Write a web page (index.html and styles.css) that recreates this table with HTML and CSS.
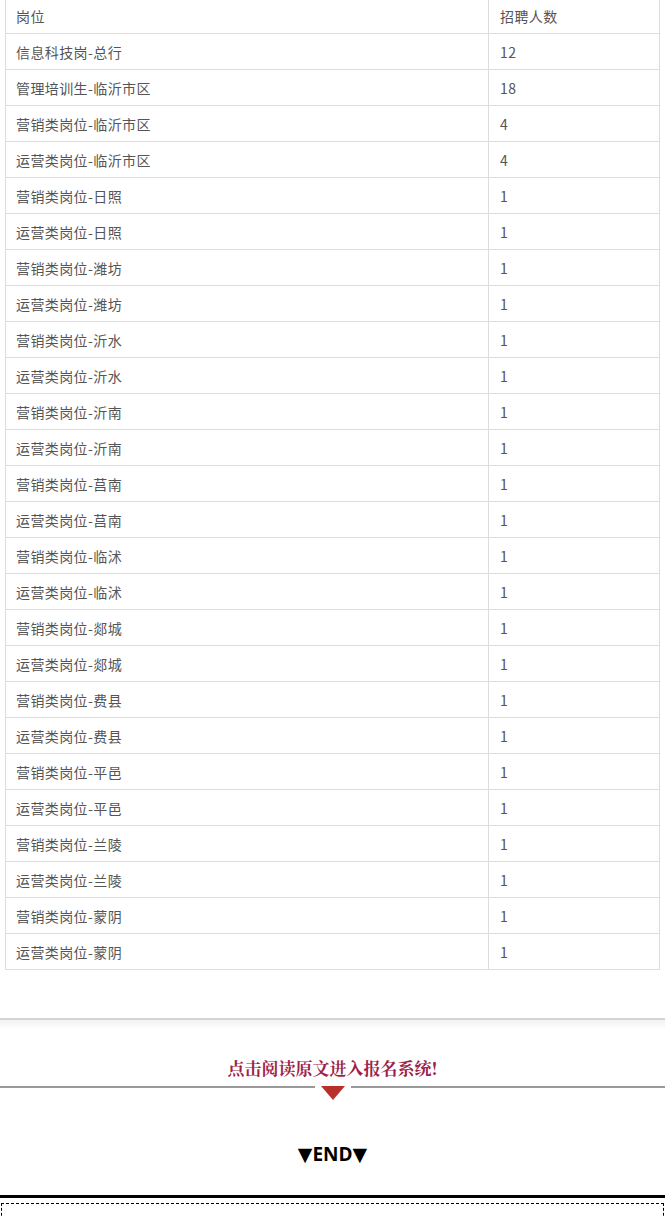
FILE: index.html
```html
<!DOCTYPE html>
<html lang="zh">
	<head>
		<meta charset="UTF-8" />
		<title>招聘岗位</title>
		<link rel="stylesheet" href="styles.css">
	</head>
	<body>
		<table class="jobs">
			<tr><td class="name">岗位</td><td>招聘人数</td></tr>
			<tr><td>信息科技岗-总行</td><td>12</td></tr>
			<tr><td>管理培训生-临沂市区</td><td>18</td></tr>
			<tr><td>营销类岗位-临沂市区</td><td>4</td></tr>
			<tr><td>运营类岗位-临沂市区</td><td>4</td></tr>
			<tr><td>营销类岗位-日照</td><td>1</td></tr>
			<tr><td>运营类岗位-日照</td><td>1</td></tr>
			<tr><td>营销类岗位-潍坊</td><td>1</td></tr>
			<tr><td>运营类岗位-潍坊</td><td>1</td></tr>
			<tr><td>营销类岗位-沂水</td><td>1</td></tr>
			<tr><td>运营类岗位-沂水</td><td>1</td></tr>
			<tr><td>营销类岗位-沂南</td><td>1</td></tr>
			<tr><td>运营类岗位-沂南</td><td>1</td></tr>
			<tr><td>营销类岗位-莒南</td><td>1</td></tr>
			<tr><td>运营类岗位-莒南</td><td>1</td></tr>
			<tr><td>营销类岗位-临沭</td><td>1</td></tr>
			<tr><td>运营类岗位-临沭</td><td>1</td></tr>
			<tr><td>营销类岗位-郯城</td><td>1</td></tr>
			<tr><td>运营类岗位-郯城</td><td>1</td></tr>
			<tr><td>营销类岗位-费县</td><td>1</td></tr>
			<tr><td>运营类岗位-费县</td><td>1</td></tr>
			<tr><td>营销类岗位-平邑</td><td>1</td></tr>
			<tr><td>运营类岗位-平邑</td><td>1</td></tr>
			<tr><td>营销类岗位-兰陵</td><td>1</td></tr>
			<tr><td>运营类岗位-兰陵</td><td>1</td></tr>
			<tr><td>营销类岗位-蒙阴</td><td>1</td></tr>
			<tr><td>运营类岗位-蒙阴</td><td>1</td></tr>
		</table>

		<div class="divider-shadow"></div>

		<div class="read-more">
			<p class="read-text">点击阅读原文进入报名系统!</p>
			<div class="arrow-line">
				<span class="line"></span>
				<span class="arrow"></span>
				<span class="line"></span>
			</div>
		</div>

		<p class="end">▼END▼</p>

		<div class="footer-line"></div>
		<div class="dashed-box"></div>
	</body>
</html>
```

FILE: styles.css
```css
body {
	margin: 0;
	font-family: "Noto Sans CJK SC", "Noto Sans", sans-serif;
	background: #fff;
	overflow: hidden;
}
.jobs {
	border-collapse: collapse;
	width: 655px;
	margin: -3px 5px 0 5px;
	table-layout: fixed;
	font-size: 14px;
	color: #555;
}
.jobs td {
	border: 1px solid #dcdcdc;
	height: 36px;
	padding: 0 10px;
	line-height: 20px;
	letter-spacing: 0.4px;
	box-sizing: border-box;
}
.jobs td:first-child {
	width: 483px;
}
.jobs td:last-child {
	padding-left: 11px;
}
.divider-shadow {
	margin-top: 48px;
	height: 10px;
	border-top: 2px solid #d4d4d4;
	background: linear-gradient(#f2f2f2, #fff);
}
.read-more {
	margin-top: 26px;
}
.read-text {
	margin: 0;
	text-align: center;
	font-family: "Noto Serif CJK SC", "Noto Sans CJK SC", serif;
	font-size: 17px;
	font-weight: bold;
	color: #9e1f4c;
	line-height: 24px;
}
.arrow-line {
	display: flex;
	align-items: flex-start;
	margin-top: 6px;
}
.arrow-line .line {
	flex: 1;
	height: 2px;
	background: #999;
}
.arrow {
	width: 0;
	height: 0;
	margin: 0 6px;
	border-left: 12px solid transparent;
	border-right: 12px solid transparent;
	border-top: 14px solid #b8302a;
}
.end {
	margin: 42px 0 0;
	text-align: center;
	font-family: "Open Sans", "DejaVu Sans", sans-serif;
	font-weight: bold;
	font-size: 19px;
	line-height: 24px;
	color: #000;
}
.footer-line {
	margin-top: 29px;
	height: 3px;
	background: #000;
}
.dashed-box {
	margin: 5px 1px 0;
	height: 40px;
	border: 1px dashed #000;
}
```
